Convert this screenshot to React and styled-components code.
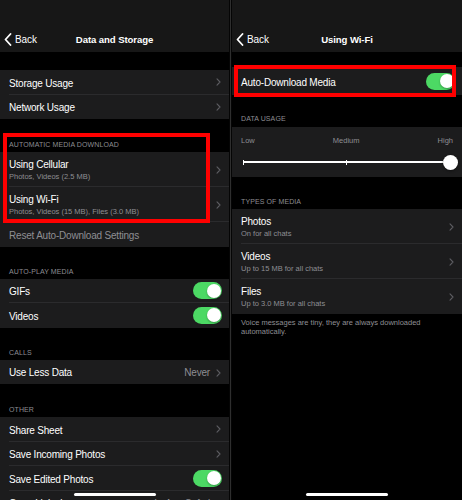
import styled, { createGlobalStyle } from "styled-components";

const GlobalStyle = createGlobalStyle`
  html, body {
    margin: 0;
    padding: 0;
    background: #000;
  }
  body {
    font-family: "Liberation Sans", Arial, sans-serif;
    -webkit-font-smoothing: antialiased;
  }
`;

const Chevron = () => (
  <svg width="5" height="8" viewBox="0 0 5 8">
    <polyline points="1,0.8 4,4 1,7.2" fill="none" stroke="#5d5d62" strokeWidth="1.1" strokeLinecap="round" strokeLinejoin="round" />
  </svg>
);

const BackChevron = () => (
  <svg width="8" height="13" viewBox="0 0 8 13">
    <polyline points="6.5,1 1.5,6.5 6.5,12" fill="none" stroke="#fff" strokeWidth="1.8" strokeLinecap="round" strokeLinejoin="round" />
  </svg>
);

const App = () => {
  return (
    <>
      <GlobalStyle />
      <Screen>
        <Panel $width={229}>
          <NavBar>
            <BackButton>
              <BackChevron />
              <span>Back</span>
            </BackButton>
            <NavTitle>Data and Storage</NavTitle>
          </NavBar>
          <Spacer $h={18} />
          <Group>
            <Row>
              <Title>Storage Usage</Title>
              <Chevron />
            </Row>
            <Row $last>
              <Title>Network Usage</Title>
              <Chevron />
            </Row>
          </Group>

          <Highlight $top={14} $left={3} $right={19} $bottom={-1}>
            <SectionHeader $h={33}>Automatic Media Download</SectionHeader>
            <Group>
              <Row $tall>
                <TextStack>
                  <Title>Using Cellular</Title>
                  <Subtitle>Photos, Videos (2.5 MB)</Subtitle>
                </TextStack>
                <Chevron />
              </Row>
              <Row $tall $forceSep>
                <TextStack>
                  <Title>Using Wi-Fi</Title>
                  <Subtitle>Photos, Videos (15 MB), Files (3.0 MB)</Subtitle>
                </TextStack>
                <Chevron />
              </Row>
            </Group>
          </Highlight>
          <Group>
            <Row $last>
              <Title $muted>Reset Auto-Download Settings</Title>
            </Row>
          </Group>

          <SectionHeader $h={32}>Auto-Play Media</SectionHeader>
          <Group>
            <Row>
              <Title>GIFs</Title>
              <Toggle><Knob /></Toggle>
            </Row>
            <Row $last>
              <Title>Videos</Title>
              <Toggle><Knob /></Toggle>
            </Row>
          </Group>

          <SectionHeader $h={32}>Calls</SectionHeader>
          <Group>
            <Row $last>
              <Title>Use Less Data</Title>
              <Accessory>
                <Value>Never</Value>
                <Chevron />
              </Accessory>
            </Row>
          </Group>

          <SectionHeader $h={33}>Other</SectionHeader>
          <Group>
            <Row>
              <Title>Share Sheet</Title>
              <Chevron />
            </Row>
            <Row>
              <Title>Save Incoming Photos</Title>
              <Chevron />
            </Row>
            <Row>
              <Title>Save Edited Photos</Title>
              <Toggle><Knob /></Toggle>
            </Row>
            <Row $last>
              <Title>Open Links in</Title>
              <Accessory>
                <Value>In-App Safari</Value>
                <Chevron />
              </Accessory>
            </Row>
          </Group>
          <HomeIndicator />
        </Panel>

        <Divider />

        <Panel $width={230}>
          <NavBar>
            <BackButton>
              <BackChevron />
              <span>Back</span>
            </BackButton>
            <NavTitle>Using Wi-Fi</NavTitle>
          </NavBar>
          <Spacer $h={15} />
          <Highlight $top={-2} $left={2} $right={6} $bottom={-2}>
            <Group>
              <Row $h={28} $last>
                <Title>Auto-Download Media</Title>
                <Toggle><Knob /></Toggle>
              </Row>
            </Group>
          </Highlight>

          <SectionHeader $h={32} $pb={4}>Data Usage</SectionHeader>
          <SliderBlock>
            <SliderLabels>
              <span>Low</span>
              <span>Medium</span>
              <span>High</span>
            </SliderLabels>
            <Track>
              <Tick />
              <TrackLine $grow={103} />
              <Tick />
              <TrackLine $grow={96} />
              <Thumb />
            </Track>
          </SliderBlock>

          <SectionHeader $h={32}>Types of Media</SectionHeader>
          <Group>
            <Row $tall>
              <TextStack>
                <Title>Photos</Title>
                <Subtitle>On for all chats</Subtitle>
              </TextStack>
              <Chevron />
            </Row>
            <Row $tall>
              <TextStack>
                <Title>Videos</Title>
                <Subtitle>Up to 15 MB for all chats</Subtitle>
              </TextStack>
              <Chevron />
            </Row>
            <Row $tall $last>
              <TextStack>
                <Title>Files</Title>
                <Subtitle>Up to 3.0 MB for all chats</Subtitle>
              </TextStack>
              <Chevron />
            </Row>
          </Group>
          <Footer>Voice messages are tiny, they are always downloaded automatically.</Footer>
          <HomeIndicator />
        </Panel>
      </Screen>
    </>
  );
};

export default App;

const Screen = styled.div`
  display: flex;
  width: 462px;
  height: 500px;
  background: #000;
  overflow: hidden;
`;

const Panel = styled.div`
  position: relative;
  width: ${(p) => p.$width}px;
  flex-shrink: 0;
  height: 500px;
  overflow: hidden;
  background: #000;
`;

const Divider = styled.div`
  width: 1px;
  flex-shrink: 0;
  background: #2e2e2e;
  border-left: 1px solid #050505;
  border-right: 1px solid #050505;
`;

const NavBar = styled.div`
  position: relative;
  height: 52px;
  background: #171717;
  display: flex;
  align-items: flex-end;
  justify-content: center;
  padding-bottom: 5px;
  box-sizing: border-box;
`;

const BackButton = styled.div`
  position: absolute;
  left: 4px;
  bottom: 6px;
  display: flex;
  align-items: center;
  gap: 3px;
  color: #fff;
  font-size: 10px;
  letter-spacing: -0.1px;
`;

const NavTitle = styled.div`
  color: #fff;
  font-size: 9.6px;
  font-weight: 700;
  letter-spacing: -0.1px;
  line-height: 14px;
`;

const Spacer = styled.div`
  height: ${(p) => p.$h}px;
`;

const Group = styled.div`
  background: #1c1c1d;
`;

const Title = styled.div`
  color: ${(p) => (p.$muted ? "#8e8e93" : "#fff")};
  font-size: 10px;
  letter-spacing: -0.2px;
  line-height: 12px;
  white-space: nowrap;
`;

const Subtitle = styled.div`
  color: #8e8e93;
  font-size: 7.5px;
  line-height: 12px;
  white-space: nowrap;
`;

const TextStack = styled.div`
  display: flex;
  flex-direction: column;
  padding-top: 7px;
`;

const Row = styled.div`
  position: relative;
  height: ${(p) => (p.$h ? p.$h : p.$tall ? 35 : 24.5)}px;
  display: flex;
  align-items: ${(p) => (p.$tall ? "flex-start" : "center")};
  justify-content: space-between;
  padding: 0 7px 0 9px;
  box-sizing: border-box;

  & > ${Title} {
    margin-top: 3px;
  }

  & > svg {
    align-self: center;
    margin-right: 1px;
  }

  &::after {
    content: "";
    display: ${(p) => (p.$last && !p.$forceSep ? "none" : "block")};
    position: absolute;
    left: 9px;
    right: 0;
    bottom: 0;
    height: 1px;
    background: #2b2b2d;
  }
`;

const Accessory = styled.div`
  display: flex;
  align-items: center;
  gap: 6px;
  margin-right: 1px;
  padding-top: 2px;
`;

const Value = styled.span`
  color: #8e8e93;
  font-size: 10px;
  letter-spacing: -0.2px;
`;

const Toggle = styled.div`
  width: 29px;
  height: 17px;
  border-radius: 9px;
  background: #4cd964;
  display: flex;
  align-items: center;
  justify-content: flex-end;
  padding: 0 1.5px;
  box-sizing: border-box;
`;

const Knob = styled.div`
  width: 14px;
  height: 14px;
  border-radius: 50%;
  background: #fff;
  box-shadow: 0 1px 2px rgba(0, 0, 0, 0.3);
`;

const SectionHeader = styled.div`
  height: ${(p) => p.$h}px;
  display: flex;
  align-items: flex-end;
  padding: 0 9px ${(p) => (p.$pb ? p.$pb : 3)}px;
  box-sizing: border-box;
  color: #8d8d92;
  font-size: 7px;
  line-height: 9px;
  text-transform: uppercase;
  letter-spacing: 0.1px;
`;

const Highlight = styled.div`
  position: relative;

  &::after {
    content: "";
    position: absolute;
    top: ${(p) => p.$top}px;
    left: ${(p) => p.$left}px;
    right: ${(p) => p.$right}px;
    bottom: ${(p) => p.$bottom}px;
    border: 4px solid #f00;
    pointer-events: none;
  }
`;

const SliderBlock = styled.div`
  height: 50px;
  background: #1c1c1d;
  padding-top: 9px;
  box-sizing: border-box;
`;

const SliderLabels = styled.div`
  display: flex;
  justify-content: space-between;
  padding: 0 9px;
  color: #8e8e93;
  font-size: 7.5px;
  line-height: 10px;
`;

const Track = styled.div`
  display: flex;
  align-items: center;
  height: 16px;
  margin-top: 8px;
  padding: 0 4px 0 11px;
`;

const Tick = styled.div`
  width: 1px;
  height: 5px;
  background: #fff;
`;

const TrackLine = styled.div`
  flex: ${(p) => p.$grow};
  height: 1.5px;
  background: #fff;
`;

const Thumb = styled.div`
  width: 15px;
  height: 15px;
  border-radius: 50%;
  background: #fff;
  box-shadow: 0 1px 3px rgba(0, 0, 0, 0.4);
  flex-shrink: 0;
`;

const Footer = styled.div`
  padding: 4px 9px 0;
  color: #8e8e93;
  font-size: 7.5px;
  line-height: 9px;
`;

const HomeIndicator = styled.div`
  position: absolute;
  bottom: 4px;
  left: 50%;
  transform: translateX(-50%);
  width: 82px;
  height: 3px;
  border-radius: 2px;
  background: #fff;
`;
